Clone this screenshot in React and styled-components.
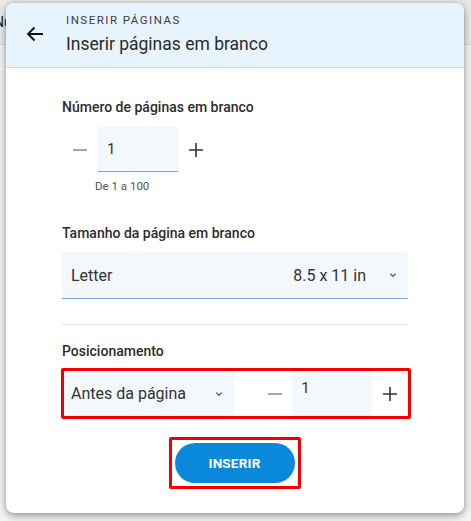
import React from "react";
import styled, { createGlobalStyle } from "styled-components";

const Global = createGlobalStyle`
  html, body { margin: 0; padding: 0; }
  body {
    font-family: Roboto, "Noto Sans", Arial, sans-serif;
    background: #f7f7f7;
    width: 471px;
    height: 521px;
    overflow: hidden;
  }
`;

const Page = styled.div`
  position: relative;
  width: 471px;
  height: 521px;
  background: #f4f4f4;
`;

const BackBar = styled.div`
  height: 44px;
  background: #e9e9e9;
  border-bottom: 1px solid #d6d6d6;
  display: flex;
  align-items: center;
  font-size: 14px;
  color: #222;
  padding-left: 0;
  text-indent: -6px;
`;

const Dialog = styled.div`
  position: absolute;
  left: 6px;
  top: 3px;
  width: 458px;
  height: 510px;
  background: #fff;
  border-radius: 8px;
  box-shadow: 0 3px 8px rgba(0,0,0,0.35), 0 0 4px rgba(0,0,0,0.15);
  overflow: hidden;
  display: flex;
  flex-direction: column;
`;

const Header = styled.div`
  height: 64px;
  background: #e7f3fd;
  border-bottom: 1px solid #cbdcea;
  display: flex;
  align-items: center;
  box-sizing: content-box;
`;

const BackBtn = styled.div`
  width: 60px;
  display: flex;
  justify-content: flex-start;
  padding-left: 20px;
  box-sizing: border-box;
  align-self: center;
  margin-top: -3px;
`;

const HeaderText = styled.div`
  display: flex;
  flex-direction: column;
  margin-top: -2px;
`;

const Eyebrow = styled.div`
  font-size: 11.5px;
  letter-spacing: 1.5px;
  color: #3c3c3c;
  line-height: 14px;
`;

const Title = styled.div`
  font-size: 17.5px;
  color: #2b2b2b;
  line-height: 22px;
  margin-top: 6px;
`;

const Body = styled.div`
  padding: 30px 56px 0 56px;
  display: flex;
  flex-direction: column;
`;

const Label = styled.div`
  font-size: 14px;
  font-weight: 500;
  color: #2d2d2d;
  line-height: 18px;
  margin-top: ${p => p.$mt || 0}px;
`;

const StepRow = styled.div`
  display: flex;
  align-items: center;
  margin-top: ${p => p.$mt || 0}px;
`;

const IconBtn = styled.div`
  width: ${p => p.$w || 36}px;
  height: 44px;
  display: flex;
  align-items: center;
  justify-content: center;
  padding-left: ${p => p.$pl || 0}px;
  box-sizing: border-box;
`;

const NumInput = styled.div`
  width: 80px;
  height: 45px;
  background: #f3f8fc;
  border-bottom: ${p => (p.$line ? "1.5px solid #5db0e3" : "none")};
  box-sizing: border-box;
  font-size: 15px;
  color: #333;
  padding: ${p => (p.$top ? "9px 9px" : "14px 9px")};
  line-height: 16px;
`;

const Hint = styled.div`
  font-size: 11.5px;
  color: #555;
  margin-top: 7px;
  margin-left: 33px;
`;

const Select = styled.div`
  display: flex;
  align-items: center;
  height: ${p => p.$h || 46}px;
  width: ${p => p.$w ? p.$w + "px" : "auto"};
  margin-top: ${p => p.$mt || 0}px;
  background: #f3f8fc;
  border-bottom: ${p => (p.$line ? "1px solid #7dadcc" : "none")};
  border-radius: ${p => (p.$line ? "3px 3px 0 0" : "0")};
  box-sizing: border-box;
  padding: 0 9px 0 ${p => p.$pl || 9}px;
  font-size: 16px;
  color: #333;
`;

const Grow = styled.div`
  flex: 1;
`;

const Meta = styled.div`
  margin-right: 21px;
`;

const Divider = styled.div`
  height: 1px;
  background: #e6e6e6;
  margin-top: 25px;
`;

const Highlight = styled.div`
  border: 3px solid #f20000;
  border-radius: 2px;
  display: ${p => (p.$inline ? "inline-flex" : "flex")};
  align-items: center;
  padding: ${p => p.$pad || "0"};
  margin-left: ${p => p.$ml || 0}px;
  margin-right: ${p => p.$mr || 0}px;
  margin-top: ${p => p.$mt || 0}px;
  height: ${p => (p.$h ? p.$h + "px" : "auto")};
  box-sizing: border-box;
`;

const ButtonWrap = styled.div`
  display: flex;
  justify-content: center;
  margin-top: 18px;
  padding-right: 1px;
`;

const Button = styled.button`
  width: 120px;
  height: 40px;
  border-radius: 20px;
  border: none;
  background: #0a88da;
  color: #fff;
  font-family: Roboto, Arial, sans-serif;
  font-weight: 700;
  font-size: 13.5px;
  letter-spacing: 0.2px;
`;

const Chevron = () => (
  <svg width="12" height="12" viewBox="0 0 12 12">
    <path d="M3.2 4.6 L6 7.4 L8.8 4.6" fill="none" stroke="#555" strokeWidth="1.3" />
  </svg>
);

const Minus = ({ color = "#8a8a8a" }) => (
  <svg width="16" height="16" viewBox="0 0 16 16">
    <path d="M1 8 H15" stroke={color} strokeWidth="1.6" />
  </svg>
);

const Plus = () => (
  <svg width="16" height="16" viewBox="0 0 16 16">
    <path d="M1 8 H15 M8 1 V15" stroke="#333" strokeWidth="1.6" />
  </svg>
);

const Arrow = () => (
  <svg width="18" height="18" viewBox="0 0 18 18">
    <path d="M17 9 H2 M8.5 2.5 L2 9 L8.5 15.5" fill="none" stroke="#111" strokeWidth="1.8" />
  </svg>
);

export default function App() {
  return (
    <Page>
      <Global />
      <BackBar>Nu</BackBar>
      <Dialog>
        <Header>
          <BackBtn><Arrow /></BackBtn>
          <HeaderText>
            <Eyebrow>INSERIR PÁGINAS</Eyebrow>
            <Title>Inserir páginas em branco</Title>
          </HeaderText>
        </Header>
        <Body>
          <Label>Número de páginas em branco</Label>
          <StepRow $mt={11}>
            <IconBtn $w={36}><Minus /></IconBtn>
            <NumInput $line>1</NumInput>
            <IconBtn $w={36}><Plus /></IconBtn>
          </StepRow>
          <Hint>De 1 a 100</Hint>

          <Label $mt={31}>Tamanho da página em branco</Label>
          <Select $line $h={47} $mt={10}>
            <Grow>Letter</Grow>
            <Meta>8.5 x 11 in</Meta>
            <Chevron />
          </Select>

          <Divider />

          <Label $mt={17}>Posicionamento</Label>
          <Highlight $ml={-1} $mr={-3} $mt={8} $h={51}>
            <Select $w={171} $h={45} $pl={7}>
              <Grow>Antes da página</Grow>
              <Chevron />
            </Select>
            <IconBtn $w={58} $pl={24}><Minus /></IconBtn>
            <NumInput $top>1</NumInput>
            <IconBtn $w={36}><Plus /></IconBtn>
          </Highlight>

          <ButtonWrap>
            <Highlight $inline $pad="3px">
              <Button>INSERIR</Button>
            </Highlight>
          </ButtonWrap>
        </Body>
      </Dialog>
    </Page>
  );
}
